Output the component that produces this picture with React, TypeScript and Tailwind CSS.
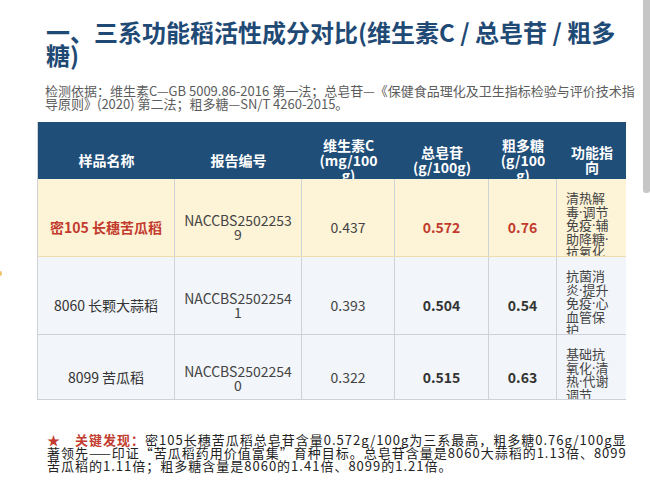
import type React from "react";

type Row = {
  name: string;
  code: [string, string];
  vc: string;
  saponin: string;
  sugar: string;
  effect: string;
  highlight?: boolean;
};

const rows: Row[] = [
  {
    name: "密105 长穗苦瓜稻",
    code: ["NACCBS2502253", "9"],
    vc: "0.437",
    saponin: "0.572",
    sugar: "0.76",
    effect: "清热解毒·调节免疫·辅助降糖·抗氧化",
    highlight: true,
  },
  {
    name: "8060 长颗大蒜稻",
    code: ["NACCBS2502254", "1"],
    vc: "0.393",
    saponin: "0.504",
    sugar: "0.54",
    effect: "抗菌消炎·提升免疫·心血管保护",
  },
  {
    name: "8099 苦瓜稻",
    code: ["NACCBS2502254", "0"],
    vc: "0.322",
    saponin: "0.515",
    sugar: "0.63",
    effect: "基础抗氧化·清热·代谢调节",
  },
];

const headers: string[][] = [
  ["样品名称"],
  ["报告编号"],
  ["维生素C", "(mg/100", "g)"],
  ["总皂苷", "(g/100g)"],
  ["粗多糖", "(g/100", "g)"],
  ["功能指", "向"],
];

const cols = "grid grid-cols-[137px_127px_93px_94px_68px_70px]";

const Cell: React.FC<{ children: React.ReactNode; short?: boolean }> = ({ children, short }) => (
  <div
    className={`flex items-center justify-center overflow-hidden text-center border-r border-[#cdd2d9] ${
      short ? "pt-[20px]" : "pt-[18px]"
    }`}
  >
    {children}
  </div>
);

export default function App() {
  return (
    <div className="relative w-[650px] h-[491px] overflow-hidden bg-white font-['Noto_Sans_CJK_SC',sans-serif] text-[#333]">
      <div className="flex flex-col pl-[37px] pr-[24px] pt-[20px]">
        {/* Heading */}
        <div className="pl-[9px]">
          <h1 className="text-[24px] font-bold leading-[23px] text-[#1f4a75]">
            一、三系功能稻活性成分对比(维生素C / 总皂苷 / 粗多糖)
          </h1>
        </div>
        <p className="mt-[18px] pl-[8px] mr-[-12px] text-[13px] leading-[13px] text-[#5c5c5c]">
          检测依据：维生素C—GB 5009.86-2016 第一法；总皂苷—《保健食品理化及卫生指标检验与评价技术指导原则》(2020) 第二法；粗多糖—SN/T 4260-2015。
        </p>

        {/* Table */}
        <div className="mt-[12px] w-[589px] border-l border-[#cdd2d9]">
          <div className={`${cols} h-[57px] overflow-hidden bg-[#1f4e79] text-white`}>
            {headers.map((lines, i) => (
              <div
                key={i}
                className="flex h-[76px] flex-col items-center justify-center text-center text-[14px] font-bold leading-[15px]"
              >
                {lines.map((l, j) => (
                  <span key={j}>{l}</span>
                ))}
              </div>
            ))}
          </div>

          {rows.map((r, i) => {
            const short = i === rows.length - 1;
            const red = r.highlight;
            return (
              <div
                key={i}
                className={`${cols} overflow-hidden text-[14px] ${
                  short ? "h-[65px] grid-rows-[65px]" : "h-[78px] grid-rows-[78px]"
                } ${
                  red
                    ? "bg-[#fdf3d7] border-b border-[#eddcae]"
                    : "bg-[#f2f5f9] border-b border-[#cdd2d9]"
                }`}
              >
                <Cell short={short}>
                  <span className={red ? "font-bold text-[#c23b2e]" : "text-[#333]"}>
                    {r.name}
                  </span>
                </Cell>
                <Cell short={short}>
                  <span className="flex flex-col leading-[14px] text-[#444]">
                    <span>{r.code[0]}</span>
                    <span>{r.code[1]}</span>
                  </span>
                </Cell>
                <Cell short={short}>
                  <span className="text-[#444]">{r.vc}</span>
                </Cell>
                <Cell short={short}>
                  <span className={`font-bold ${red ? "text-[#c23b2e]" : "text-[#333]"}`}>
                    {r.saponin}
                  </span>
                </Cell>
                <Cell short={short}>
                  <span className={`font-bold ${red ? "text-[#c23b2e]" : "text-[#333]"}`}>
                    {r.sugar}
                  </span>
                </Cell>
                <div className="flex items-start overflow-hidden border-r border-[#cdd2d9] pl-[9px] pt-[13px]">
                  <p className="w-[47px] font-['Noto_Sans','Noto_Sans_CJK_SC',sans-serif] text-[13px] leading-[13.5px] text-[#444]">
                    {r.effect}
                  </p>
                </div>
              </div>
            );
          })}
        </div>

        {/* Key finding */}
        <p className="mt-[33px] pl-[10px] mr-[-14px] text-[13px] leading-[13px] tracking-[1px] text-[#222]">
          <span className="text-[#c23b2e]">★</span>
          <span className="ml-[14px] font-bold text-[#c23b2e]">关键发现：</span>
          密105长穗苦瓜稻总皂苷含量0.572g/100g为三系最高，粗多糖0.76g/100g显著领先——印证“苦瓜稻药用价值富集”育种目标。总皂苷含量是8060大蒜稻的1.13倍、8099苦瓜稻的1.11倍；粗多糖含量是8060的1.41倍、8099的1.21倍。
        </p>
      </div>

      {/* scrollbar thumb */}
      <div className="absolute right-0 top-0 h-[193px] w-[7px] rounded-b-[3px] bg-[#c6c6c6]" />
      {/* stray marker at left edge */}
      <div className="absolute left-0 top-[271px] h-[5px] w-[2px] rounded-r bg-[#f2c46c]" />
    </div>
  );
}
